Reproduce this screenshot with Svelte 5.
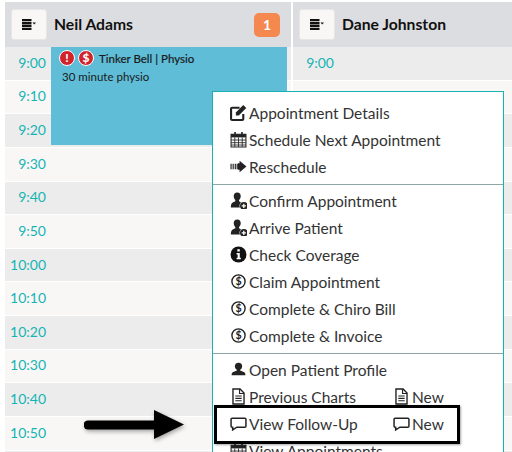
<script>
	const times = ['9:00', '9:10', '9:20', '9:30', '9:40', '9:50', '10:00', '10:10', '10:20', '10:30', '10:40', '10:50', ''];
	const columns = [
		{ name: 'Neil Adams', badge: 1, rows: times },
		{ name: 'Dane Johnston', rows: ['9:00', '', '', '', '', '', '', '', '', '', '', '', ''] }
	];
	const groups = [
		[
			{ icon: 'edit', label: 'Appointment Details' },
			{ icon: 'calendar', label: 'Schedule Next Appointment' },
			{ icon: 'move', label: 'Reschedule' }
		],
		[
			{ icon: 'userplus', label: 'Confirm Appointment' },
			{ icon: 'userplus', label: 'Arrive Patient' },
			{ icon: 'info', label: 'Check Coverage' },
			{ icon: 'dollar', label: 'Claim Appointment' },
			{ icon: 'dollar', label: 'Complete & Chiro Bill' },
			{ icon: 'dollar', label: 'Complete & Invoice' }
		],
		[
			{ icon: 'user', label: 'Open Patient Profile' },
			{ icon: 'file', label: 'Previous Charts', extra: true },
			{ icon: 'comment', label: 'View Follow-Up', extra: true },
			{ icon: 'calendar', label: 'View Appointments' }
		]
	];
</script>

{#snippet icon(name)}
	<svg class="icon" viewBox="0 0 16 16" aria-hidden="true">
		{#if name === 'edit'}
			<path d="M12.500 9.500V14a1 1 0 0 1-1 1H2a1 1 0 0 1-1-1V4.500a1 1 0 0 1 1-1h7" fill="none" stroke="#222" stroke-width="2" />
			<path d="M5.500 8 12.500 1l2.800 2.800-7 7H5.500z" fill="#222" />
		{:else if name === 'calendar'}
			<path d="M1 3h14v12H1z" fill="none" stroke="#222" stroke-width="1" />
			<path d="M1 3h14v3H1z" fill="#222" />
			<path d="M4 1h1.500v3H4zM10.500 1H12v3h-1.500z" fill="#222" />
			<path d="M1 8.500h14M1 11h14M1 13.200h14M4.500 6v9M8 6v9M11.500 6v9" stroke="#222" stroke-width=".8" fill="none" />
		{:else if name === 'move'}
			<path d="M9 2.500 15.500 8 9 13.500V11H7.500V5H9z" fill="#222" />
			<path d="M1 5.500v5M3 5.500v5M5 5.500v5M6.800 5.500v5" stroke="#222" stroke-width="1.100" fill="none" />
		{:else if name === 'userplus'}
			<path d="M6.800 .5c2.200 0 3.300 1.600 3.300 3.500 0 1.400-.6 2.700-1.600 3.500v1.300l1.800.8a4.800 4.800 0 0 0-1 4.900H.8c0-2.600.6-4.100 2.200-4.800l2-.9V7.500C4.100 6.700 3.500 5.400 3.500 4c0-1.900 1.100-3.500 3.300-3.500z" fill="#222" />
			<circle cx="13" cy="13" r="3.600" fill="#222" />
			<path d="M11 13h4M13 11v4" stroke="#fff" stroke-width="1.200" />
		{:else if name === 'info'}
			<circle cx="8" cy="8" r="7.500" fill="#111" />
			<rect x="6.900" y="3" width="2.300" height="2.200" fill="#fff" />
			<path d="M6.200 6.500h3v4.500h1v1.500H6.200V11h1V8h-1z" fill="#fff" />
		{:else if name === 'dollar'}
			<circle cx="8" cy="8" r="6.200" fill="none" stroke="#222" stroke-width="1.300" />
			<text x="8" y="11.500" text-anchor="middle" class="glyph">$</text>
		{:else if name === 'user'}
			<circle cx="8" cy="5" r="3.400" fill="#222" />
			<path d="M6.500 7.500h3v1.500l3.500 1.300c1 .4 1.500 1.300 1.500 3.200h-13c0-1.900.5-2.800 1.500-3.200L6.500 9z" fill="#222" />
		{:else if name === 'file'}
			<path d="M2.800 1h6.700l3.700 3.700V15H2.800z" fill="none" stroke="#222" stroke-width="1.300" />
			<path d="M9 1v4.200h4.200M5 7.500h6M5 9.700h6M5 12h6" fill="none" stroke="#222" stroke-width="1.100" />
		{:else if name === 'comment'}
			<path d="M2 3h12a1 1 0 0 1 1 1v6.500a1 1 0 0 1-1 1H6.500L2.500 14v-2.500H2a1 1 0 0 1-1-1V4a1 1 0 0 1 1-1z" fill="none" stroke="#222" stroke-width="1.400" />
		{/if}
	</svg>
{/snippet}

<div class="schedule">
	{#each columns as col}
		<section class="column">
			<header class="col-header">
				<button class="menu-btn" aria-label="Column menu">
					<svg viewBox="0 0 14 11" width="14" height="11" aria-hidden="true">
						<path d="M0 0h9.500v2.300H0zM0 2.900h9.500v2.300H0zM0 5.800h9.500v2.300H0zM0 8.700h9.500V11H0z" fill="#111" />
						<path d="M10.500 3.500h3.500l-1.750 2z" fill="#111" />
					</svg>
				</button>
				<span class="col-name">{col.name}</span>
				{#if col.badge}
					<span class="count">{col.badge}</span>
				{/if}
			</header>
			<div class="rows">
				{#each col.rows as time}
					<div class="row"><span class="time">{time}</span></div>
				{/each}
				{#if col.badge}
					<article class="appt">
						<div class="appt-title">
							<span class="alert">!</span>
							<span class="alert">$</span>
							<span class="appt-name">Tinker Bell | Physio</span>
						</div>
						<div class="appt-note">30 minute physio</div>
					</article>
				{/if}
			</div>
		</section>
	{/each}

	<nav class="context-menu">
		{#each groups as group}
			<ul>
				{#each group as item}
					<li>
						{@render icon(item.icon)}
						<span class="label" class:short={item.extra}>{item.label}</span>
						{#if item.extra}
							{@render icon(item.icon)}
							<span class="label">New</span>
						{/if}
					</li>
				{/each}
			</ul>
		{/each}
	</nav>

	<div class="callout-box"></div>
	<svg class="callout-arrow" viewBox="0 0 102 32" width="102" height="32" aria-hidden="true">
		<path d="M4 16h70" stroke="#000" stroke-width="9" stroke-linecap="round" />
		<path d="M70 1 100 15.500 70 30z" fill="#000" />
	</svg>
</div>

<style>
	:global(body) {
		background: #fff;
		overflow: hidden;
	}

	.schedule {
		position: relative;
		display: flex;
		gap: 2px;
		width: 512px;
		height: 452px;
		padding: 2px 0 0 5px;
		box-sizing: border-box;
		overflow: hidden;
		font-family: Lato, "Open Sans", sans-serif;
		color: #222;
	}

	.column {
		flex: 0 0 286px;
		min-width: 0;
	}

	.column:last-of-type {
		flex: 1;
	}

	.col-header {
		display: flex;
		align-items: center;
		height: 45px;
		padding: 0 6px;
		background: #dcdde0;
	}

	.menu-btn {
		display: flex;
		align-items: center;
		justify-content: center;
		width: 36px;
		height: 31px;
		padding: 0;
		background: #f8f7f5;
		border: 1px solid #e6e6e6;
		border-radius: 3px;
	}

	.col-name {
		margin: 0 0 2px 7px;
		font-size: 15.700px;
		font-weight: 700;
		color: #111;
	}

	.count {
		margin-left: auto;
		margin-right: 5px;
		width: 26px;
		height: 24px;
		border-radius: 5px;
		background: #f5884f;
		color: #fff;
		font-size: 14px;
		font-weight: 700;
		line-height: 24px;
		text-align: center;
	}

	.rows {
		position: relative;
	}

	.row {
		height: 32.640px;
		border-bottom: 1px solid #fff;
		background: #f8f7f5;
		display: flex;
		align-items: center;
	}

	.row:nth-child(odd) {
		background: #ececec;
	}

	.time {
		width: 41px;
		margin-bottom: 2px;
		font-size: 14px;
		color: #14b4b4;
		text-align: right;
	}

	.appt {
		position: absolute;
		top: 0;
		left: 46px;
		width: 236px;
		height: 98px;
		box-sizing: border-box;
		padding: 3px 0 0 8px;
		background: #5fbdd8;
		font-size: 11px;
		color: #1a1a1a;
	}

	.appt-title {
		display: flex;
		align-items: center;
		gap: 3px;
		font-weight: 700;
		font-size: 11.500px;
	}

	.appt-name {
		margin-left: 2px;
		font-weight: 400;
		-webkit-text-stroke: .2px #1a1a1a;
	}

	.alert {
		width: 14px;
		height: 14px;
		border: 1px solid #fff;
		border-radius: 50%;
		background: #d2232a;
		color: #fff;
		font-size: 12px;
		font-weight: 900;
		line-height: 14px;
		text-align: center;
	}

	.appt-note {
		margin: 4px 0 0 3px;
		font-size: 11.500px;
	}

	.context-menu {
		position: absolute;
		top: 91px;
		left: 212px;
		width: 292px;
		box-sizing: border-box;
		background: #fff;
		border: 1px solid #17b3b3;
		color: #333;
		font-size: 15.500px;
	}

	ul {
		list-style: none;
		margin: 0;
		padding: 3px 0 3px 17px;
		border-top: 1px solid #8fa6a6;
	}

	ul:first-child {
		padding-top: 8px;
		border-top: 0;
	}

	li {
		display: flex;
		align-items: center;
		gap: 2px;
		height: 27px;
		box-sizing: border-box;
		padding-bottom: 2px;
	}

	.icon {
		flex: none;
		width: 17px;
		height: 17px;
	}

	.glyph {
		font-size: 10px;
		font-weight: 700;
		fill: #222;
	}

	.label {
		white-space: nowrap;
	}

	.short {
		width: 142px;
	}

	.callout-box {
		position: absolute;
		top: 405px;
		left: 214px;
		width: 246px;
		height: 39px;
		box-sizing: border-box;
		border: 3px solid #000;
		box-shadow: 1px 1px 2px rgba(0, 0, 0, .35);
	}

	.callout-arrow {
		position: absolute;
		top: 409px;
		left: 84px;
		filter: drop-shadow(1px 2px 2px rgba(0, 0, 0, .35));
	}
</style>
